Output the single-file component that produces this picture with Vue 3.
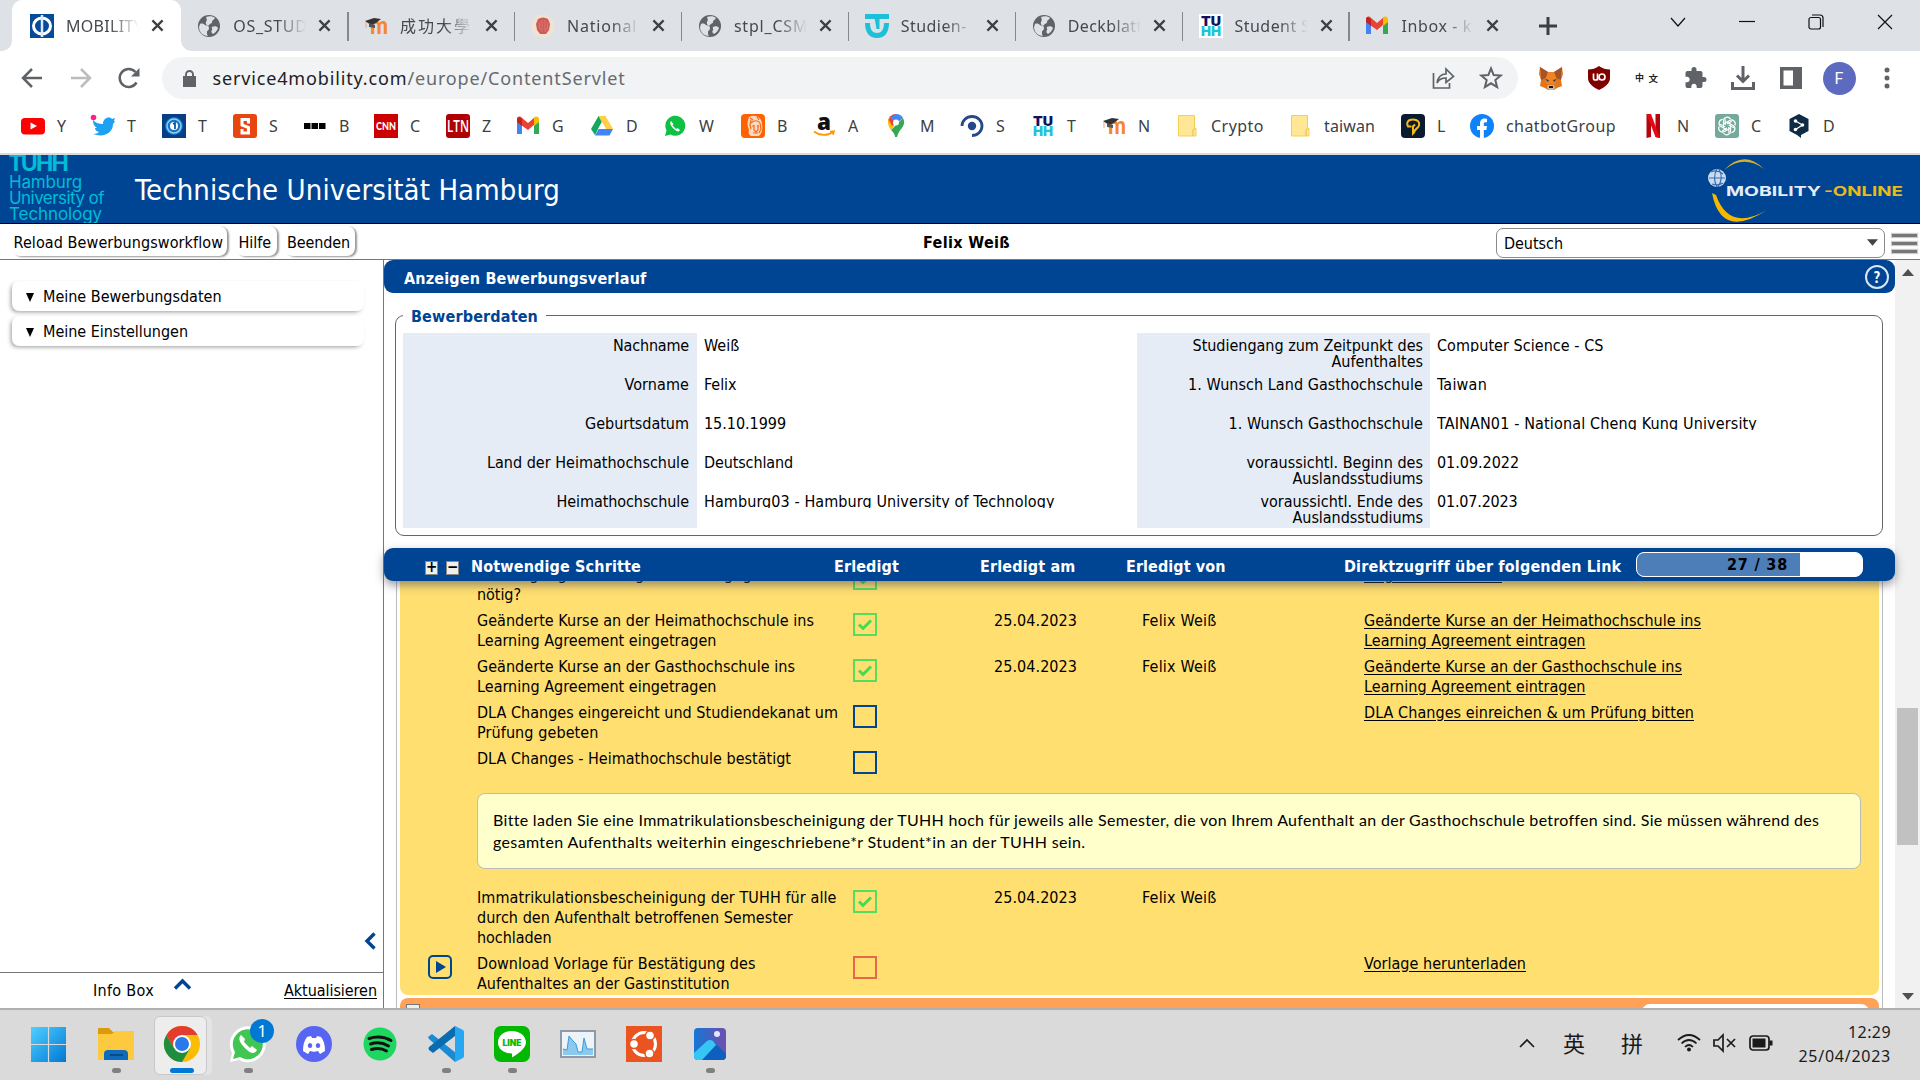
<script setup>
// Tracks a run of text so that it fills the given width in pixels.
const vFit = {
  mounted(el, { value }) {
    if (!value) return
    const n = el.textContent.trim().length
    const w = el.getBoundingClientRect().width
    el.style.letterSpacing = ((value - w) / n).toFixed(3) + 'px'
  }
}

const moodle = '<text x="6" y="20" font-family="Lato" font-weight="900" font-size="25" fill="#f5872a" textLength="18" lengthAdjust="spacingAndGlyphs">m</text><path d="M1 7L10 4l7 1-5 4-5 2z" fill="#333"/><path d="M5 9l6 2v3l-6-1z" fill="#555"/><path d="M2 8v6" stroke="#e9a98a" stroke-width="1"/>'
const globe = '<circle cx="12" cy="12" r="11" fill="#5f6368"/><path d="M3 10c2-1 4 0 5 1s4 0 4 3-2 2-2 4 0 3 1 4c-5 0-9-4-9-9zM9 3c3-1 7-1 9 1-1 2-3 2-3 4s-2 1-3 3-4-1-3-3 1-2 0-5zM15 13c2-1 5-1 6 1-1 3-3 5-5 6-2-1-2-3-1-4s-1-2 0-3z" fill="#dee1e6"/>'
const gmail = '<path d="M1 6v14h5V11z" fill="#4285f4"/><path d="M23 6v14h-5V11z" fill="#34a853"/><path d="M1 5c0-2 2-3 4-2l7 6 7-6v7l-7 6-7-5-4-3z" fill="#ea4335"/><path d="M18 4l1-1c2-1 4 0 4 2v3l-5 4z" fill="#fbbc04"/><path d="M1 8V5c0-1 1-2 2-2l3 2v7z" fill="#c5221f"/>'
const tuhh = '<text x="2" y="11.5" font-family="Inter" font-weight="900" font-size="13.5" fill="#14115e" textLength="20" lengthAdjust="spacingAndGlyphs">TU</text><text x="2" y="22" font-family="Inter" font-weight="900" font-size="13.5" fill="#1fc3d8" textLength="20" lengthAdjust="spacingAndGlyphs">HH</text>'
const folder = '<path d="M3.500 1.500h16v13h1.500v7.500h-17.500z" fill="#ffe796" stroke="#f5cf55"/><path d="M18 22v-6q0-1 1.500-1" fill="none" stroke="#e6bd3c"/>'
const whats = '<path d="M2 22l1.500-5.500A10 10 0 1 1 7.500 20.500z" fill="#0dc143"/><path d="M8 7c-2 2 0 5 3 8s5 3 6 1l-2.500-2-1.500 1-3.500-3.500 1-1.500z" fill="#fff"/>'

const tabs = [
  { t: 'MOBILITY', w: 77, i: '<rect width="24" height="24" fill="#064a9b"/><ellipse cx="12" cy="12" rx="8.500" ry="8" fill="none" stroke="#fff" stroke-width="3"/><path d="M12 1v22" stroke="#dbe9fa" stroke-width="2.500"/>' },
  { t: 'OS_STUDY', w: 84, i: globe },
  { t: '成功大學', w: 72, i: moodle },
  { t: 'National C', w: 86, i: '<circle cx="12" cy="12" r="11.500" fill="#f0e3d3"/><path d="M7 5q5-3 10 0l2 5-1 6-3 4H9l-3-4-1-6z" fill="#cf5a56"/><path d="M8 8l1 8m2-10v12m3-12v12m3-10l-1 8" stroke="#dc8078" stroke-width=".8"/>' },
  { t: 'stpl_CSMS', w: 84, i: globe },
  { t: 'Studien-', w: 66, i: '<path d="M0 0h24v5H0z" fill="#1cc0d8"/><path d="M0 9h5c0 7 3 10 7 10s7-3 7-10h5c0 9-4 15-12 15S0 18 0 9z" fill="#1cc0d8"/><path d="M9.500 4h5v11h-3z" fill="#1cc0d8"/>' },
  { t: 'Deckblatt', w: 75, i: globe },
  { t: 'Student S', w: 76, i: '<rect width="24" height="24" fill="#fff"/>' + tuhh },
  { t: 'Inbox - kn', w: 81, i: gmail }
]

const marks = [
  { c: 33, t: 'Y', i: '<rect y="4" width="24" height="16.500" rx="4" fill="#f00"/><path d="M9.500 8.500v7l6.500-3.500z" fill="#fff"/>' },
  { c: 103, t: 'T', i: '<path d="M2 6c3 3 6 4 10 4 0-6 6-8 9-5l3-1-1 3 1 .5-2 2.500c0 9-9 14-20 10 3 0 5-1 6-2-3-1-4-2-4-4h2c-3-2-4-4-4-8z" fill="#1da1f2"/><circle cx="2.500" cy="3.500" r="2.800" fill="#ff1e8c"/>' },
  { c: 174, t: 'T', i: '<rect width="24" height="24" fill="#063f86"/><circle cx="12" cy="12" r="9" fill="#1477c6"/><circle cx="12" cy="12" r="7" fill="none" stroke="#8fd0f4" stroke-width="1.500"/><circle cx="12" cy="12" r="4" fill="#fff"/><path d="M11 10l2-1v6" fill="none" stroke="#0a4f99" stroke-width="1.700"/>' },
  { c: 245, t: 'S', i: '<rect width="24" height="24" rx="3" fill="#e84610"/><path d="M15.500 9.500V5.500h-6.500v5.500l6.500 2.500V19h-6.500v-4" fill="none" stroke="#fff" stroke-width="3"/>' },
  { c: 315, t: 'B', i: '<path d="M1 9h6.500v6H1zM8.500 9H15v6H8.500zM16 9h6.500v6H16z" fill="#000"/>' },
  { c: 386, t: 'C', i: '<rect width="24" height="24" fill="#c00"/><text x="2" y="16" font-family="Lato" font-weight="900" font-size="11.500" fill="#fff" textLength="20" lengthAdjust="spacingAndGlyphs">CNN</text>' },
  { c: 458, t: 'Z', i: '<rect width="24" height="24" rx="3" fill="#b00005"/><text x="1" y="18" font-family="Open Sans" font-weight="600" font-size="17" fill="#fff" textLength="22" lengthAdjust="spacingAndGlyphs">LTN</text>' },
  { c: 528, t: 'G', i: gmail },
  { c: 602, t: 'D', i: '<path d="M8.500 2h7l-4.500 7.500L5 21 1 15z" fill="#11a861"/><path d="M8.500 2h7L23 15h-7.500z" fill="#ffcf48"/><path d="M8.700 15H23l-3.500 6.500H5z" fill="#4285f4"/><path d="M12 8l4 7H8z" fill="#fff"/>' },
  { c: 675, t: 'W', i: whats },
  { c: 753, t: 'B', i: '<rect width="24" height="24" rx="4" fill="#ff6200"/><path d="M8 3c5-3 13 0 13 7 1 5 0 9-3 12h-8c-2-1-3-3-2-6-2-4-2-9 0-13z" fill="#fbd9c0"/><path d="M10 9c3-3 7-3 9 0M10 6l-1 5 1 4m9-6l1 6-2 4M13 11v5l2 2 2-2v-5M11 12h2m3 0h2M12 19h5M9 4l3 2m4-3l2 3" fill="none" stroke="#f26a1b" stroke-width="1.200"/>' },
  { c: 824, t: 'A', i: '<text x="5" y="16" font-family="Open Sans" font-weight="800" font-size="23" fill="#111" textLength="14" lengthAdjust="spacingAndGlyphs">a</text><path d="M2 17.500c6 4.500 14 4.500 19 .5M18 17.500l4-.3-1 3.500" fill="none" stroke="#f90" stroke-width="1.700"/>' },
  { c: 896, t: 'M', i: '<path d="M12 0a8 8 0 0 0-8 8l8 0z" fill="#ea4335"/><path d="M5 4L12 0a8 8 0 0 1 7 4l-7 6z" fill="#4285f4"/><path d="M4 8c0-2 1-3 2-5l6 6-5 7C5 13 4 11 4 8z" fill="#fbbc04"/><path d="M19 4c2 4 1 7-1 10-2 2-4 5-5 9h-2c0-3-2-5-4-7z" fill="#34a853"/><path d="M6 3l5 5-3 4-3-6z" fill="#ea4335"/><circle cx="12" cy="8.500" r="3" fill="#fff"/>' },
  { c: 972, t: 'S', i: '<path d="M2 12A10 9.500 0 1 1 12 21.500" fill="none" stroke="#24488a" stroke-width="2.800"/><circle cx="12" cy="12" r="4.200" fill="#24488a"/>' },
  { c: 1043, t: 'T', i: tuhh },
  { c: 1114, t: 'N', i: moodle },
  { c: 1187, t: 'Crypto', w: 53, i: folder },
  { c: 1300, t: 'taiwan', w: 51, i: folder },
  { c: 1413, t: 'L', i: '<rect width="24" height="24" rx="4" fill="#0a1a30"/><path d="M10.500 12.500H7c-2-4 0-7 5-7s7 3 6 6-4 3-5 7l-1 1v-7l2-2" fill="none" stroke="#f6b817" stroke-width="2"/>' },
  { c: 1482, t: 'chatbotGroup', w: 110, i: '<circle cx="12" cy="12" r="12" fill="#0e82f8"/><path d="M10 24v-8H7v-4h3V9.500C10 6 12 4.500 14.500 4.500l2.500.2v3.500h-1.500C14 8.200 13.800 9 13.800 10v2H17l-.6 4h-2.600v8z" fill="#fff"/>' },
  { c: 1653, t: 'N', i: '<path d="M5.500 0h4.500v23l-4.500 1zM14.500 0H19v24l-4.500-1z" fill="#b1060f"/><path d="M5.500 0H10l9 24-4.500-1z" fill="#e50914"/>' },
  { c: 1727, t: 'C', i: '<rect width="24" height="24" rx="3" fill="#74aa9c"/><g fill="none" stroke="#fff" stroke-width="1.200" stroke-linejoin="round"><path id="k" d="M8.500 13.500V7a3.800 3.800 0 0 1 7-2M12 10l5-3"/><use href="#k" transform="rotate(60 12 12)"/><use href="#k" transform="rotate(120 12 12)"/><use href="#k" transform="rotate(180 12 12)"/><use href="#k" transform="rotate(240 12 12)"/><use href="#k" transform="rotate(300 12 12)"/></g>' },
  { c: 1799, t: 'D', i: '<path d="M12 0l9.500 5v12L14 21v3l-4-3L2.500 17V5z" fill="#0f2b46"/><path d="M8.500 7l7 4-7 4.500" fill="none" stroke="#fff" stroke-width="1.300"/><circle cx="8.500" cy="7" r="1.800" fill="#fff"/><circle cx="15.500" cy="11" r="1.800" fill="#fff"/><circle cx="8.500" cy="15.500" r="1.800" fill="#fff"/>' }
]
const slot = k => ({ width: (k + 1 < marks.length ? marks[k + 1].c - marks[k].c : 60) + 'px' })

const tools = [
  '<g fill="none" stroke="#5f6368" stroke-width="1.700"><path d="M2.500 7v15h16v-5"/><path d="M6 17c1-6 4-9 9-9V3l7.500 7.500-7.500 6v-4.500c-4 0-7 1-9 5z"/></g>',
  '<path d="M12 2.500l2.700 6.600 7 .5-5.400 4.500 1.800 7L12 17.300l-6.100 3.800 1.800-7L2.300 9.600l7-.5z" fill="none" stroke="#5f6368" stroke-width="2"/>',
  '<path d="M1 1l8 5h6l8-5 1 7-2 6 1 6-5 2-3 2H9l-3-2-5-2 1-6L0 8z" fill="#e2761b"/><path d="M1 1l8 5-2 6-5 2 0-6zM23 1l-8 5 2 6 5 2 0-6z" fill="#a4542b"/><path d="M9 6h6l3 8-2 4H8l-2-4z" fill="#f08424"/><path d="M6 13l4 1-1 2zM18 13l-4 1 1 2z" fill="#26405c"/><path d="M9 19h6l1 3-2 2h-4l-2-2z" fill="#c9b8aa"/><path d="M10 20h4v2h-4z" fill="#161616"/>',
  '<path d="M12 0c3 2.500 7 3.500 11 3.500V12c0 6-6 9.500-11 12C7 21.500 1 18 1 12V3.500C5 3.500 9 2.500 12 0z" fill="#800000"/><path d="M6.500 7.500v5c0 2 4 2 4 0v-5v7" fill="none" stroke="#fff" stroke-width="1.700"/><circle cx="15" cy="11" r="3" fill="none" stroke="#fff" stroke-width="1.700"/>',
  '<text x="0" y="15" font-family="Noto Sans CJK TC" font-weight="700" font-size="9" fill="#222">中</text><text x="13.500" y="16" font-family="Noto Sans CJK TC" font-weight="700" font-size="9.500" fill="#222">文</text>',
  '<path d="M21 11h-1.500V7c0-1.100-.9-2-2-2h-4V3.500a2.500 2.500 0 0 0-5 0V5h-4c-1.100 0-2 .9-2 2v3.800H4c1.500 0 2.700 1.200 2.700 2.700S5.500 16.200 4 16.200H2.500V20c0 1.100.9 2 2 2h3.800v-1.500c0-1.500 1.200-2.700 2.700-2.700s2.700 1.200 2.700 2.700V22h3.800c1.100 0 2-.9 2-2v-4H21a2.500 2.500 0 0 0 0-5z" fill="#5f6368"/>',
  '<path d="M12 0v15M6 9.500l6 6 6-6M1.500 16v6.500h21V16" fill="none" stroke="#5f6368" stroke-width="3"/>',
  '<path d="M1 1h22v22H1z" fill="#5f6368"/><path d="M4.500 4.500H14v15H4.500z" fill="#fff"/>'
]

const left = [
  { l: [['Nachname', 76]], v: 'Weiß', w: 35.5 },
  { l: [['Vorname', 64.5]], v: 'Felix', w: 32.5 },
  { l: [['Geburtsdatum', 104]], v: '15.10.1999', w: 82 },
  { l: [['Land der Heimathochschule', 202]], v: 'Deutschland', w: 89 },
  { l: [['Heimathochschule', 132.5]], v: 'Hamburg03 - Hamburg University of Technology', w: 350.5 }
]
const right = [
  { l: [['Studiengang zum Zeitpunkt des', 230.5], ['Aufenthaltes', 91.5]], v: 'Computer Science - CS', w: 166.5 },
  { l: [['1. Wunsch Land Gasthochschule', 235]], v: 'Taiwan', w: 50 },
  { l: [['1. Wunsch Gasthochschule', 194.5]], v: 'TAINAN01 - National Cheng Kung University', w: 320 },
  { l: [['voraussichtl. Beginn des', 176.5], ['Auslandsstudiums', 130.5]], v: '01.09.2022', w: 82 },
  { l: [['voraussichtl. Ende des', 162.5], ['Auslandsstudiums', 130.5]], v: '01.07.2023', w: 80.5 }
]

const stepsA = [
  { n: [['Bestätigung Änderung weiterhin gegeben', 312], ['nötig?', 44]], s: 'ok', d: '', p: '', k: [['Folge dokumentiert', 138]] },
  { n: [['Geänderte Kurse an der Heimathochschule ins', 337], ['Learning Agreement eingetragen', 239.5]], s: 'ok', d: '25.04.2023', p: 'Felix Weiß', k: [['Geänderte Kurse an der Heimathochschule ins', 337], ['Learning Agreement eintragen', 221.5]] },
  { n: [['Geänderte Kurse an der Gasthochschule ins', 318], ['Learning Agreement eingetragen', 239.5]], s: 'ok', d: '25.04.2023', p: 'Felix Weiß', k: [['Geänderte Kurse an der Gasthochschule ins', 318], ['Learning Agreement eintragen', 221.5]] },
  { n: [['DLA Changes eingereicht und Studiendekanat um', 361], ['Prüfung gebeten', 121.5]], s: 'open', k: [['DLA Changes einreichen & um Prüfung bitten', 330]] },
  { n: [['DLA Changes - Heimathochschule bestätigt', 314]], s: 'open', k: [] }
]
const stepsB = [
  { n: [['Immatrikulationsbescheinigung der TUHH für alle', 359.5], ['durch den Aufenthalt betroffenen Semester', 315.5], ['hochladen', 74.5]], s: 'ok', d: '25.04.2023', p: 'Felix Weiß', k: [] },
  { n: [['Download Vorlage für Bestätigung des', 278.5], ['Aufenthaltes an der Gastinstitution', 252.5]], s: 'due', play: true, k: [['Vorlage herunterladen', 162]] }
]
const groups = [stepsA, stepsB]

const apps = [
  { i: '<defs><linearGradient id="w" x2="1" y2="1"><stop stop-color="#4fd0ff"/><stop offset="1" stop-color="#0078d4"/></linearGradient></defs><path d="M-1 1h17v17H-1zM17 1h17v17H17zM-1 19h17v17H-1zM17 19h17v17H17z" fill="url(#w)"/><path d="M16.500 1v35M-1 18.500h35" stroke="#dadada" stroke-width="1.200"/>' },
  { run: 1, i: '<path d="M0 3q0-1 1-1h10l4 4h20q1 0 1 1v6H0z" fill="#dd9b0b"/><path d="M0 8h14l3-3h19v29H0z" fill="#fdc93f"/><path d="M6 34v-6q0-4 4-4h16q4 0 4 4v6z" fill="#0f6cbd"/><path d="M12 29h13" stroke="#0a4a86" stroke-width="2"/>' },
  { active: 1, i: '<circle cx="18" cy="18" r="18" fill="#fbbc05"/><path d="M2.400 9A18 18 0 0 0 18 36l8-13.500-16-.5z" fill="#1e8e3e"/><path d="M18 9h15.600A18 18 0 0 0 2.400 9l8 13.500z" fill="#e33b2e"/><circle cx="18" cy="18" r="9" fill="#fff"/><circle cx="18" cy="18" r="7" fill="#2a79e8"/>' },
  { run: 1, badge: '1', i: '<path d="M0 36l2-9A18 18 0 1 1 9 34z" fill="#fff"/><path d="M3 33l2-7A15 15 0 1 1 10 31z" fill="#42c653"/><path d="M11 9c-4 4 0 9 5 14s9 5 11 1l-5-4-2 2-6-6 1-3z" fill="#fff"/>' },
  { i: '<circle cx="18" cy="18" r="18" fill="#5865f2"/><path d="M7 25c0-6 1-10 4-14l4-1 1 2h4l1-2 4 1c3 4 4 8 4 14l-5 3-2-3c-3 1-5 1-8 0l-2 3z" fill="#fff"/><ellipse cx="14" cy="19.500" rx="2.200" ry="2.500" fill="#5865f2"/><ellipse cx="22" cy="19.500" rx="2.200" ry="2.500" fill="#5865f2"/>' },
  { i: '<circle cx="18" cy="18" r="16.500" fill="#1ed760"/><path d="M7 12.500c8-2.500 16-1.500 22 2M8.500 18c6-2 13-1 18 2M9.500 23.500c5-1.500 11-1 15 1.500" fill="none" stroke="#121212" stroke-width="3" stroke-linecap="round"/>' },
  { run: 1, i: '<path d="M0 11l4-3 24 19-1 9-26-23z" fill="#1a8ad4"/><path d="M27 0v10L5 27l-4-3q-1-2 0-3z" fill="#0a6cb0"/><path d="M27 0l8 4q1 1 1 2v24q0 1-1 2l-8 4z" fill="#25a7f2"/>' },
  { run: 1, i: '<rect width="36" height="36" rx="7" fill="#00b900"/><path d="M18 5c8 0 14 5 14 11.500 0 6-9 12-14 15v-4C10 27.500 4 23 4 16.500S10 5 18 5z" fill="#fff"/><text x="8.500" y="20" font-family="Inter" font-weight="900" font-size="8.500" fill="#00b900" textLength="19" lengthAdjust="spacingAndGlyphs">LINE</text>' },
  { i: '<rect x="1" y="5" width="34" height="26" fill="#eef3f8" stroke="#8d9aa8" stroke-width="2"/><path d="M3 23l4 1 2-14 4 5 3 3 2 8h4l2-14 3 11h6v6H3z" fill="#8cc9ee"/><path d="M3 23l4 1 2-14 4 5 3 3 2 8h4l2-14 3 11h6" fill="none" stroke="#3a9bdc"/>' },
  { i: '<rect width="36" height="36" fill="#e95420"/><circle cx="18" cy="18" r="11.500" fill="none" stroke="#fff" stroke-width="3"/><g fill="#fff" stroke="#e95420" stroke-width="1.500"><circle cx="8" cy="18" r="4.500"/><circle cx="24" cy="9.500" r="4.500"/><circle cx="23.500" cy="27.500" r="4.500"/></g>' },
  { run: 1, i: '<defs><linearGradient id="p" x2="1"><stop stop-color="#1477d4"/><stop offset="1" stop-color="#6c4fae"/></linearGradient></defs><rect x="2" y="2" width="32" height="32" rx="4" fill="url(#p)"/><path d="M8 34l12-14q3-3 6 0l8 8v2q0 4-4 4z" fill="#0d5fc0"/><path d="M2 27l13-12q3-2 6 0l3 4L10 34H6q-4 0-4-4z" fill="#35c6f4"/><circle cx="25" cy="8" r="3" fill="#e8e4fb"/>' }
]
</script>

<template>
  <div class="screen">
    <header class="tabs">
      <div v-for="(t, k) in tabs" :key="k" class="tab" :class="{ on: k === 0, first: k === 1 }">
        <svg viewBox="0 0 24 24" class="i24" v-html="t.i" />
        <span class="title"><span v-fit="t.w">{{ t.t }}</span></span>
        <svg class="x" viewBox="0 0 14 14"><path d="M1.500 1.500l11 11m0-11l-11 11" stroke="#3c4043" stroke-width="2.400" /></svg>
      </div>
      <svg class="plus" viewBox="0 0 18 18"><path d="M9 0v18M0 9h18" stroke="#3c4043" stroke-width="3" /></svg>
      <div class="win">
        <svg viewBox="0 0 16 16"><path d="M1 4l7 8 7-8" /></svg>
        <svg viewBox="0 0 16 16"><path d="M0 7.500h16" /></svg>
        <svg viewBox="0 0 16 16"><rect x="1" y="3.500" width="11.500" height="11.500" rx="2" /><path d="M4 1h8q3 0 3 3v9" /></svg>
        <svg viewBox="0 0 16 16"><path d="M1 1l14 14M15 1L1 15" /></svg>
      </div>
    </header>

    <nav class="bar">
      <svg class="nv" viewBox="0 0 22 22"><path d="M21 11H3M11 2l-9 9 9 9" fill="none" stroke="#5f6368" stroke-width="2.500" /></svg>
      <svg class="nv" viewBox="0 0 22 22"><path d="M1 11h18M11 2l9 9-9 9" fill="none" stroke="#babcbe" stroke-width="2.500" /></svg>
      <svg class="nv" viewBox="0 0 22 22"><path d="M18.500 15.500A9 9 0 1 1 17.500 5" fill="none" stroke="#5f6368" stroke-width="2.500" /><path d="M21.500 1v8.500H13z" fill="#5f6368" /></svg>
      <div class="omni">
        <svg class="lock" viewBox="0 0 13 17"><path d="M0 6h13v11H0z" fill="#5f6368" /><path d="M3 7V4.500a3.500 3.500 0 0 1 7 0V7" fill="none" stroke="#5f6368" stroke-width="1.900" /></svg>
        <span v-fit="413" class="url">service4mobility.com<i>/europe/ContentServlet</i></span>
      </div>
      <div class="tools">
        <svg v-for="(t, k) in tools" :key="k" class="i24" :class="{ star: k === 1 }" viewBox="0 0 24 24" v-html="t" />
        <b class="avatar">F</b>
        <svg class="i24" viewBox="0 0 24 24"><g fill="#5f6368"><circle cx="12" cy="4" r="2.500" /><circle cx="12" cy="12" r="2.500" /><circle cx="12" cy="20" r="2.500" /></g></svg>
      </div>
    </nav>

    <nav class="marks">
      <div v-for="(m, k) in marks" :key="k" class="mark" :style="slot(k)">
        <svg class="i24" viewBox="0 0 24 24" v-html="m.i" /><span v-fit="m.w">{{ m.t }}</span>
      </div>
    </nav>

    <section class="brand">
      <div class="tuhh">
        <b v-fit="58">TUHH</b>
        <span v-fit="73">Hamburg</span>
        <span v-fit="95">University of</span>
        <span v-fit="93">Technology</span>
      </div>
      <h1><span v-fit="425">Technische Universität Hamburg</span></h1>
      <svg class="mo" viewBox="0 0 200 66">
        <path d="M17 14Q37-7 57 13Q37-2 17 14z" fill="#d6b12c" />
        <path d="M5 37Q14 84 60 54Q22 76 9 39z" fill="#f5b800" />
        <circle cx="10" cy="22" r="9" fill="#c9dcf0" />
        <path d="M2 22h16M4 16q6-3 12 2M5 28q6 2 11-1M10 13q-5 9 0 18M12 13q5 9-1 18" fill="none" stroke="#3a6db0" stroke-width="1.200" />
        <text x="19" y="40" fill="#e3edf8" textLength="95" lengthAdjust="spacingAndGlyphs">MOBILITY</text>
        <text x="117" y="40" fill="#eab91a" textLength="79" lengthAdjust="spacingAndGlyphs">-ONLINE</text>
      </svg>
    </section>

    <section class="menu">
      <span class="btn b1"><span v-fit="209.5">Reload Bewerbungsworkflow</span></span>
      <span class="btn b2"><span v-fit="32.5">Hilfe</span></span>
      <span class="btn b3"><span v-fit="63">Beenden</span></span>
      <b class="who"><span v-fit="87">Felix Weiß</span></b>
      <div class="select"><span v-fit="59">Deutsch</span><svg viewBox="0 0 12 7"><path d="M0 0h12L6 7z" fill="#444" /></svg></div>
      <div class="burger"><i /><i /><i /></div>
    </section>

    <main>
      <aside>
        <div class="acc"><svg viewBox="0 0 8 9"><path d="M0 0h8L4 9z" /></svg><span v-fit="178.5">Meine Bewerbungsdaten</span></div>
        <div class="acc"><svg viewBox="0 0 8 9"><path d="M0 0h8L4 9z" /></svg><span v-fit="145">Meine Einstellungen</span></div>
        <div class="fold"><svg viewBox="0 0 12 18"><path d="M10.500 1.500L3 9l7.500 7.500" fill="none" stroke="#004494" stroke-width="3.400" /></svg></div>
        <footer>
          <span v-fit="61">Info Box</span>
          <svg viewBox="0 0 18 12"><path d="M1.500 10.500L9 3l7.500 7.500" fill="none" stroke="#004494" stroke-width="3.400" /></svg>
          <u><span v-fit="93">Aktualisieren</span></u>
        </footer>
      </aside>

      <article>
        <div class="content">
          <h2 class="head"><span v-fit="242.500">Anzeigen Bewerbungsverlauf</span><i class="help">?</i></h2>
          <div class="box">
            <b class="legend"><span v-fit="127">Bewerberdaten</span></b>
            <div v-for="(col, c) in [left, right]" :key="c" class="col" :class="'c' + c">
              <div v-for="(r, k) in col" :key="k" class="pair">
                <div class="lab"><div v-for="(t, j) in r.l" :key="j"><span v-fit="t[1]">{{ t[0] }}</span></div></div>
                <div class="val"><span v-fit="r.w">{{ r.v }}</span></div>
              </div>
            </div>
          </div>

          <div class="head steps-head">
            <i class="sq">+</i><i class="sq">−</i>
            <b class="h1"><span v-fit="170">Notwendige Schritte</span></b>
            <b class="h2"><span v-fit="65">Erledigt</span></b>
            <b class="h3"><span v-fit="95.500">Erledigt am</span></b>
            <b class="h4"><span v-fit="99.500">Erledigt von</span></b>
            <b class="h5"><span v-fit="276.500">Direktzugriff über folgenden Link</span></b>
            <div class="prog"><div><span v-fit="61">27 / 38</span></div></div>
          </div>

          <div class="scroll">
            <div class="yellow">
              <template v-for="(g, gi) in groups" :key="gi">
                <div v-if="gi" class="note">
                  <div><span v-fit="1325.500">Bitte laden Sie eine Immatrikulationsbescheinigung der TUHH hoch für jeweils alle Semester, die von Ihrem Aufenthalt an der Gasthochschule betroffen sind. Sie müssen während des</span></div>
                  <div><span v-fit="592.500">gesamten Aufenthalts weiterhin eingeschriebene*r Student*in an der TUHH sein.</span></div>
                </div>
                <div v-for="(s, k) in g" :key="k" class="step">
                  <div class="go"><svg v-if="s.play" viewBox="0 0 24 24"><rect x="1" y="1" width="22" height="22" rx="4" fill="none" stroke="#004494" stroke-width="2" /><path d="M8 6l10 6-10 6z" fill="#004494" /></svg></div>
                  <div class="name"><div v-for="(t, j) in s.n" :key="j"><span v-fit="t[1]">{{ t[0] }}</span></div></div>
                  <div class="state"><i :class="s.s"><svg v-if="s.s === 'ok'" viewBox="0 0 14 11"><path d="M1 5.500l4 4L13 1.500" fill="none" stroke="#3fdc55" stroke-width="3" /></svg></i></div>
                  <div class="date"><span v-if="s.d" v-fit="83">{{ s.d }}</span></div>
                  <div class="by"><span v-if="s.p" v-fit="74.500">{{ s.p }}</span></div>
                  <div class="link"><div v-for="(t, j) in s.k" :key="j"><span v-fit="t[1]">{{ t[0] }}</span></div></div>
                </div>
              </template>
            </div>
            <div class="orange"><i /><b /></div>
          </div>
        </div>
        <div class="sb">
          <svg viewBox="0 0 12 7"><path d="M0 7h12L6 0z" fill="#505050" /></svg>
          <i />
          <svg viewBox="0 0 12 7"><path d="M0 0h12L6 7z" fill="#505050" /></svg>
        </div>
      </article>
    </main>

    <footer class="task">
      <div class="apps">
        <div v-for="(a, k) in apps" :key="k" class="app" :class="{ run: a.run, active: a.active }">
          <svg viewBox="0 0 36 36" v-html="a.i" />
          <em v-if="a.badge">{{ a.badge }}</em>
        </div>
      </div>
      <div class="tray">
        <svg class="up" viewBox="0 0 16 9"><path d="M1 8l7-7 7 7" /></svg>
        <span class="ime">英</span>
        <span class="ime two">拼</span>
        <svg class="wifi" viewBox="0 0 24 18"><path d="M1 6q11-10 22 0M4.500 9.500q7.500-7 15 0M8 13q4-4 8 0" /><circle cx="12" cy="15.500" r="2" fill="#1a1a1a" stroke="none" /></svg>
        <svg class="vol" viewBox="0 0 24 18"><path d="M1 6h4l5-5v16l-5-5H1zM14 5l8 8M22 5l-8 8" /></svg>
        <svg class="bat" viewBox="0 0 24 16"><rect x="1" y="1" width="19" height="14" rx="3" /><rect x="3.500" y="3.500" width="13" height="9" fill="#1a1a1a" stroke="none" /><path d="M22 5.500v5" stroke-width="3" /></svg>
        <div class="clock"><div><span v-fit="43">12:29</span></div><div><span v-fit="92.500">25/04/2023</span></div></div>
      </div>
    </footer>
  </div>
</template>

<style>
body { margin: 0; overflow: hidden; }
</style>

<style scoped>
* { box-sizing: border-box; }
.screen { width: 1920px; height: 1080px; display: flex; flex-direction: column; background: #fff; color: #000; font: 16px/20px "DejaVu Sans Condensed", "DejaVu Sans", sans-serif; font-stretch: condensed; overflow: hidden; }
span { white-space: nowrap; }
svg { flex: none; display: block; overflow: visible; }
i, em { font-style: normal; }
.i24 { width: 24px; height: 24px; }

.tabs { height: 51px; flex: none; background: #dee1e6; display: flex; padding-left: 12px; font: 16px/24px "Noto Sans", "Noto Sans CJK TC", sans-serif; color: #45494d; }
.tab { width: 166.9px; height: 51px; flex: none; display: flex; align-items: center; padding-left: 18px; position: relative; }
.tab:not(.on):not(.first)::before { content: ""; position: absolute; left: 1px; top: 12px; width: 1.500px; height: 29px; background: #85888c; }
.tab.on { background: #fff; border-radius: 10px 10px 0 0; width: 169px; margin-right: -1.800px; }
.tab.on::before, .tab.on::after { content: ""; position: absolute; bottom: 0; width: 10px; height: 10px; }
.tab.on::before { left: -10px; background: radial-gradient(circle at 0 0, transparent 9.500px, #fff 10px); }
.tab.on::after { right: -10px; background: radial-gradient(circle at 100% 0, transparent 9.500px, #fff 10px); }
.title { width: 73px; margin-left: 12px; overflow: hidden; -webkit-mask-image: linear-gradient(90deg, #000 60%, transparent); mask-image: linear-gradient(90deg, #000 60%, transparent); }
.title span { display: inline-block; }
.x { width: 13px; height: 13px; margin-left: 12px; }
.plus { width: 18px; height: 18px; margin: 17px 0 0 25px; }
.win { margin: 14px 27px 0 auto; display: flex; gap: 53px; }
.win svg { width: 16px; height: 16px; fill: none; stroke: #111; stroke-width: 1.200; }

.bar { height: 54px; flex: none; display: flex; align-items: center; padding: 0 21px; }
.nv { width: 22px; height: 22px; margin-right: 26.500px; }
.omni { width: 1356px; height: 42px; margin: 0 -1327px 0 -5px; border-radius: 21px; background: #f1f3f4; display: flex; align-items: center; padding-left: 21px; flex: none; font: 18px/24px "Noto Sans", sans-serif; color: #202124; }
.lock { width: 13px; height: 17px; margin-right: 17px; }
.url { margin-top: -1px; }
.url i { color: #676b70; }
.tools { display: flex; align-items: center; gap: 24px; margin: 0 0 0 auto; z-index: 1; }
.star { margin-right: 12px; }
.avatar { width: 33px; height: 33px; margin: 0 -4.500px; border-radius: 50%; background: #5c6bc0; color: #fff; font: 16px/33px Roboto, sans-serif; text-align: center; }

.marks { height: 48px; flex: none; display: flex; align-items: center; padding: 0 0 6px 21px; font: 16px/24px "Noto Sans", sans-serif; color: #3c4043; }
.mark { display: flex; align-items: center; flex: none; gap: 12px; }

.brand { height: 71px; flex: none; border-top: 2px solid #dadada; border-bottom: 1px solid #000; background: #004494; display: flex; overflow: hidden; color: #fff; }
.tuhh { width: 135px; padding-left: 9px; display: flex; flex-direction: column; align-items: flex-start; font: 17px/16px Inter, sans-serif; color: #00bcd4; }
.tuhh b { font: 900 23px/22px Lato, sans-serif; margin-top: -4px; margin-bottom: 1px; }
.brand h1 { margin: 0; font-size: 29px; line-height: 71px; font-weight: 400; }
.mo { width: 200px; height: 66px; margin: 1px 13px 0 auto; font: 700 13.500px Inter, sans-serif; }

.menu { height: 36px; flex: none; display: flex; align-items: center; border-bottom: 1px solid #777; }
.btn { height: 30px; line-height: 33px; border-radius: 8px; box-shadow: 2px 1px 2px #999; text-align: right; padding-right: 4px; margin-top: -1px; }
.b1 { width: 215px; margin-left: 12px; }
.b2 { width: 41px; margin-left: 9px; padding-right: 6px; }
.b3 { width: 70px; margin-left: 8px; padding-right: 5px; }
.who { margin-left: 568px; padding-top: 2px; }
.select { width: 389px; height: 30px; margin: 2px 7px 0 auto; border: 1px solid #8a8a8a; border-radius: 7px; display: flex; align-items: center; justify-content: space-between; padding: 3px 6px 0 7px; }
.select svg { width: 11px; height: 7px; margin-top: -4px; }
.burger { width: 25px; margin: 3px 3px 0 0; display: flex; flex-direction: column; gap: 5px; }
.burger i { height: 3px; background: #777; box-shadow: 0 0 1px 1px #ccc; }

main { flex: 1; display: flex; min-height: 0; border-bottom: 2px solid #b0b0b0; }
aside { width: 384px; flex: none; border-right: 1px solid #777; display: flex; flex-direction: column; padding-top: 21px; }
.acc { height: 30px; margin: 0 19px 5px 12px; border-radius: 7px; box-shadow: -2px 2px 4px -1px #999; display: flex; align-items: center; padding: 2px 0 0 14px; background: #fff; }
.acc svg { width: 8px; height: 9px; margin-right: 9px; }
.fold { margin: auto 7px 22px auto; }
.fold svg { width: 12px; height: 18px; }
aside footer { height: 36px; border-top: 1px solid #777; display: flex; padding: 8px 6px 0 93px; }
aside footer svg { width: 19px; height: 12px; margin: -3px 0 0 19px; }
aside footer u { margin-left: auto; text-underline-offset: 2px; }

article { flex: 1; display: flex; min-width: 0; }
.content { width: 1511px; display: flex; flex-direction: column; min-height: 0; }
.head { height: 33px; flex: none; margin: 0; background: #004494; color: #fff; border-radius: 9px; font-size: 16px; line-height: 37px; font-weight: 700; display: flex; padding-left: 20px; }
.help { margin: 5px 6px 0 auto; width: 24px; height: 24px; border: 2px solid #d9e6f5; border-radius: 50%; line-height: 20px; text-align: center; font-family: "Open Sans", sans-serif; }
.box { position: relative; height: 221px; margin: 22px 12px 12px 11px; flex: none; border: 1px solid #666; border-radius: 9px; display: flex; padding: 17px 0 0 7px; }
.legend { position: absolute; top: -9px; left: 7px; padding: 0 8px; background: #fff; color: #004494; }
.col { width: 734px; }
.pair { height: 39px; display: flex; line-height: 16px; }
.lab { width: 294px; background: #e5ecf5; text-align: right; padding: 5px 8px 0 0; }
.val { height: 14px; margin: 5px 0 0 7px; overflow: hidden; }
.c1 .lab { width: 293px; padding-right: 7px; }

.steps-head { position: relative; z-index: 2; box-shadow: 0 4px 10px rgba(70, 70, 90, .55); padding: 0; }
.sq { width: 13px; height: 14px; margin-top: 13px; background: #eee; border: 1px solid #888; color: #000; line-height: 11px; text-align: center; font-size: 15px; }
.sq:first-child { margin-left: 41px; margin-right: 8px; }
.h1 { width: 363px; margin-left: 12px; }
.h2 { width: 146px; }
.h3 { width: 146px; }
.h4 { width: 218px; }
.h5 { width: 292px; }
.prog { width: 227px; height: 25px; margin-top: 4px; border: 1px solid #fff; border-radius: 8px; background: #fff; overflow: hidden; }
.prog div { width: 163px; height: 23px; background: #4d7eb8; color: #000; line-height: 24px; text-align: right; padding-right: 12px; }

.scroll { flex: 1; min-height: 0; overflow: hidden; margin: 0 12px 0 12px; border: solid #bbb; border-width: 0 1px; padding: 0 3px; }
.yellow { height: 414px; background: #ffdf70; border-radius: 0 0 8px 8px; overflow: hidden; }
.yellow > .step:first-child { margin-top: -16px; }
.step { display: flex; min-height: 46px; padding-bottom: 6px; }
.go { width: 77px; padding: 1px 0 0 28px; }
.go svg { width: 24px; height: 24px; }
.name { width: 376px; }
.state { width: 141px; padding-top: 2px; }
.state i { display: flex; width: 24px; height: 23px; border: 2px solid #55dd60; align-items: center; justify-content: center; }
.state .open { border-color: #004494; }
.state .due { border-color: #ea6452; }
.state svg { width: 14px; height: 11px; margin-top: -1px; }
.date { width: 148px; }
.by { width: 222px; }
.link div { text-decoration: underline; text-underline-offset: 2px; }
.note { height: 76px; margin: -2px 18px 19px 77px; border: 1px solid #bbb; border-radius: 8px; background: #ffffcc; padding: 15px 15px; font: 16px/22px Lato, sans-serif; }
.orange { height: 30px; margin-top: 3px; background: #ffa257; border-radius: 8px 8px 0 0; display: flex; justify-content: space-between; padding: 6px 10px 0 6px; }
.orange i { width: 14px; height: 14px; background: #eee; border: 1px solid #777; }
.orange b { width: 227px; height: 25px; border-radius: 8px; background: #fff; }

.sb { width: 25px; background: #f1f1f1; display: flex; flex-direction: column; align-items: center; }
.sb svg { width: 12px; height: 7px; margin-top: 9px; }
.sb i { width: 21px; height: 137px; margin-top: 432px; background: #c1c1c1; }
.sb svg:last-child { margin-top: 148px; }

.task { height: 70px; flex: none; background: #dadada; display: flex; justify-content: space-between; }
.apps { display: flex; padding-left: 17px; }
.app { width: 66px; height: 70px; padding: 16px 15px; position: relative; }
.app svg { width: 36px; height: 36px; position: relative; }
.app.active::before { content: ""; position: absolute; left: 5px; top: 6px; width: 51px; height: 57px; border-radius: 6px; background: #ededed; border: 1px solid #c8c8c8; box-shadow: 5px 0 0 #e4e4e4; }
.app.run::after, .app.active::after { content: ""; position: absolute; left: 29px; top: 58px; width: 9px; height: 5px; border-radius: 3px; background: #808080; }
.app.active::after { left: 21px; width: 24px; background: #0078d4; }
.app em { position: absolute; left: 35px; top: 9px; width: 24px; height: 24px; border-radius: 50%; background: #0078d4; color: #fff; font: 16px/24px "Noto Sans", sans-serif; text-align: center; }
.tray { display: flex; align-items: center; padding-right: 29px; }
.tray svg { fill: none; stroke: #1a1a1a; stroke-width: 1.700; margin-top: -4px; }
.up { width: 16px; height: 9px; }
.ime { font: 22px/30px "Noto Sans CJK SC", sans-serif; margin: -6px 0 0 28px; color: #1a1a1a; }
.two { margin-left: 36px; }
.wifi { width: 24px; height: 18px; margin-left: 34px; }
.vol { width: 24px; height: 18px; margin-left: 12px; }
.bat { width: 24px; height: 16px; margin-left: 12px; }
.clock { width: 93px; margin: -2px 0 0 25px; text-align: right; font: 16px/24px "Noto Sans", sans-serif; color: #1a1a1a; }
</style>
